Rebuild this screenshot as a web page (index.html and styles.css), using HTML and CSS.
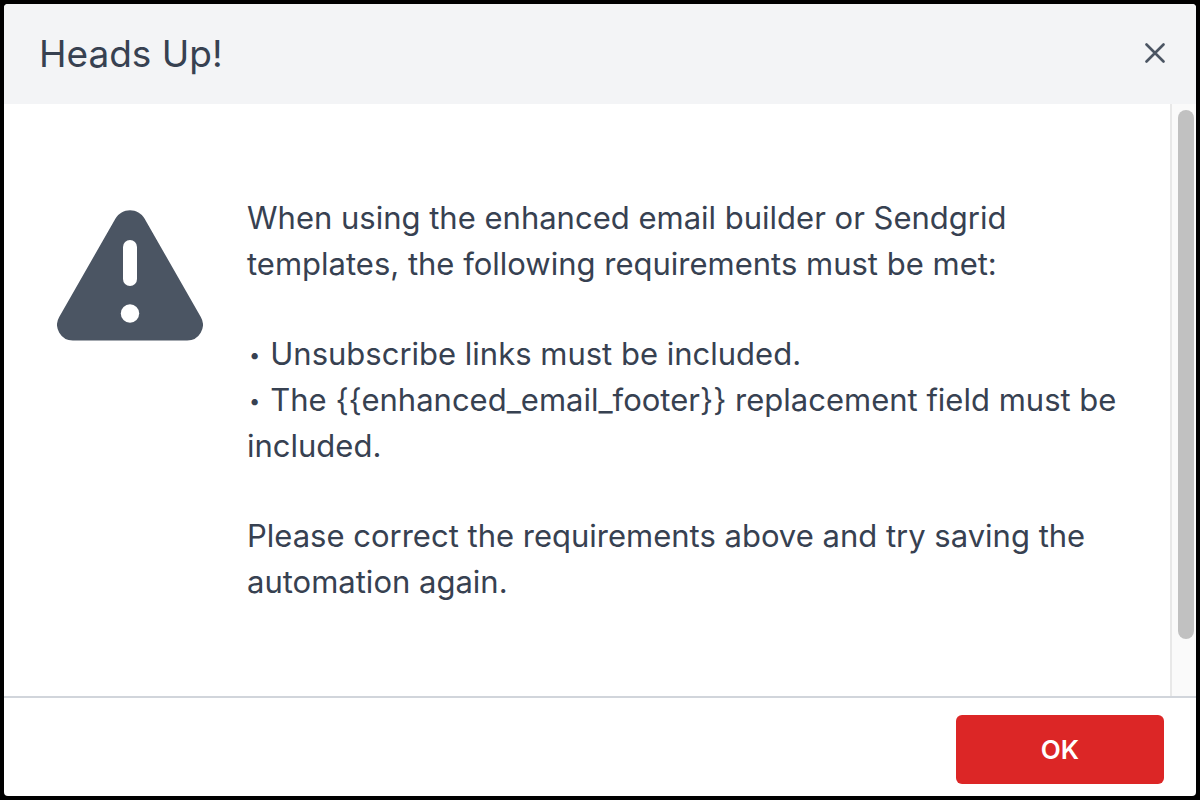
FILE: index.html
```
<!DOCTYPE html>
<html lang="en">
<head>
    <meta charset="UTF-8">
    <meta name="viewport" content="width=device-width, initial-scale=1.0">
    <title>Heads Up!</title>
    <link rel="stylesheet" href="styles.css">
</head>
<body>

    <div class="modal" role="dialog" aria-labelledby="modal-title">
        <!-- Header -->
        <header class="modal-header">
            <h1 id="modal-title">Heads Up!</h1>
            <button class="close-btn" type="button" aria-label="Close">
                <svg width="20" height="20" viewBox="0 0 20 20">
                    <path d="M1.500 1.500L18.500 18.500M18.500 1.500L1.500 18.500" fill="none" stroke="#4b5563" stroke-width="2.600" stroke-linecap="round"/>
                </svg>
            </button>
        </header>

        <!-- Message -->
        <div class="modal-body">
            <div class="message">
                <svg class="warning-icon" width="146" height="131" viewBox="0 0 146 131">
                    <path d="M58.500 8.500A16.800 16.800 0 0 1 87.500 8.500L143.800 107A15.700 15.700 0 0 1 130 130.500H16A15.700 15.700 0 0 1 2.200 107Z" fill="#4b5563"/>
                    <path d="M73 37V69" stroke="#fff" stroke-width="14" stroke-linecap="round"/>
                    <circle cx="73" cy="103.500" r="9.200" fill="#fff"/>
                </svg>
                <div class="message-text">
                    <p>When using the enhanced email builder or Sendgrid templates, the following requirements must be met:</p>
                    <ul>
                        <li>Unsubscribe links must be included.</li>
                        <li>The {{enhanced_email_footer}} replacement field must be included.</li>
                    </ul>
                    <p>Please correct the requirements above and try saving the automation again.</p>
                </div>
            </div>
            <div class="scroll-track">
                <div class="scroll-thumb"></div>
            </div>
        </div>

        <!-- Footer -->
        <footer class="modal-footer">
            <button class="ok-btn" type="button">OK</button>
        </footer>
    </div>

</body>
</html>
```
FILE: styles.css
```
* {
    box-sizing: border-box;
}

body {
    margin: 0;
    padding: 4px;
    min-height: 100vh;
    display: flex;
    background-color: #000;
    color: #374151;
    font-family: Inter, "Liberation Sans", sans-serif;
}

.modal {
    flex: 1;
    display: flex;
    flex-direction: column;
    background-color: #fff;
    border-radius: 4px;
    overflow: hidden;
}

/* Header */
.modal-header {
    display: flex;
    align-items: center;
    justify-content: space-between;
    height: 100px;
    padding: 0 31px 2px 35px;
    background-color: #f3f4f6;
}

.modal-header h1 {
    margin: 0;
    font-size: 37px;
    font-weight: 400;
}

.close-btn {
    display: flex;
    padding: 0;
    border: none;
    background: none;
    cursor: pointer;
}

/* Message */
.modal-body {
    flex: 1;
    display: flex;
}

.message {
    flex: 1;
    display: flex;
    align-items: flex-start;
    gap: 44px;
    padding: 91px 40px 80px 53px;
}

.warning-icon {
    flex-shrink: 0;
    margin-top: 15px;
}

.message-text {
    font-size: 31px;
    line-height: 46px;
}

.message-text p,
.message-text ul {
    margin: 0 0 44px;
}

.message-text p:last-child {
    margin-bottom: 0;
}

.message-text ul {
    padding: 0;
    list-style: none;
}

.message-text li::before {
    content: "•";
    margin: 0 10px 0 2px;
    font-size: 20px;
    line-height: 1;
    vertical-align: 3px;
}

/* Scrollbar */
.scroll-track {
    width: 26px;
    padding: 6px 2px 57px 6px;
    background-color: #fafafa;
    border-left: 2px solid #e8e8e8;
}

.scroll-thumb {
    height: 100%;
    border-radius: 8px;
    background-color: #c1c1c1;
}

/* Footer */
.modal-footer {
    display: flex;
    justify-content: flex-end;
    padding: 17px 32px 12px;
    border-top: 2px solid #d1d5db;
}

.ok-btn {
    width: 208px;
    height: 69px;
    border: none;
    border-radius: 6px;
    background-color: #dc2626;
    color: #fff;
    font-family: inherit;
    font-size: 26px;
    font-weight: 600;
    cursor: pointer;
}
```
